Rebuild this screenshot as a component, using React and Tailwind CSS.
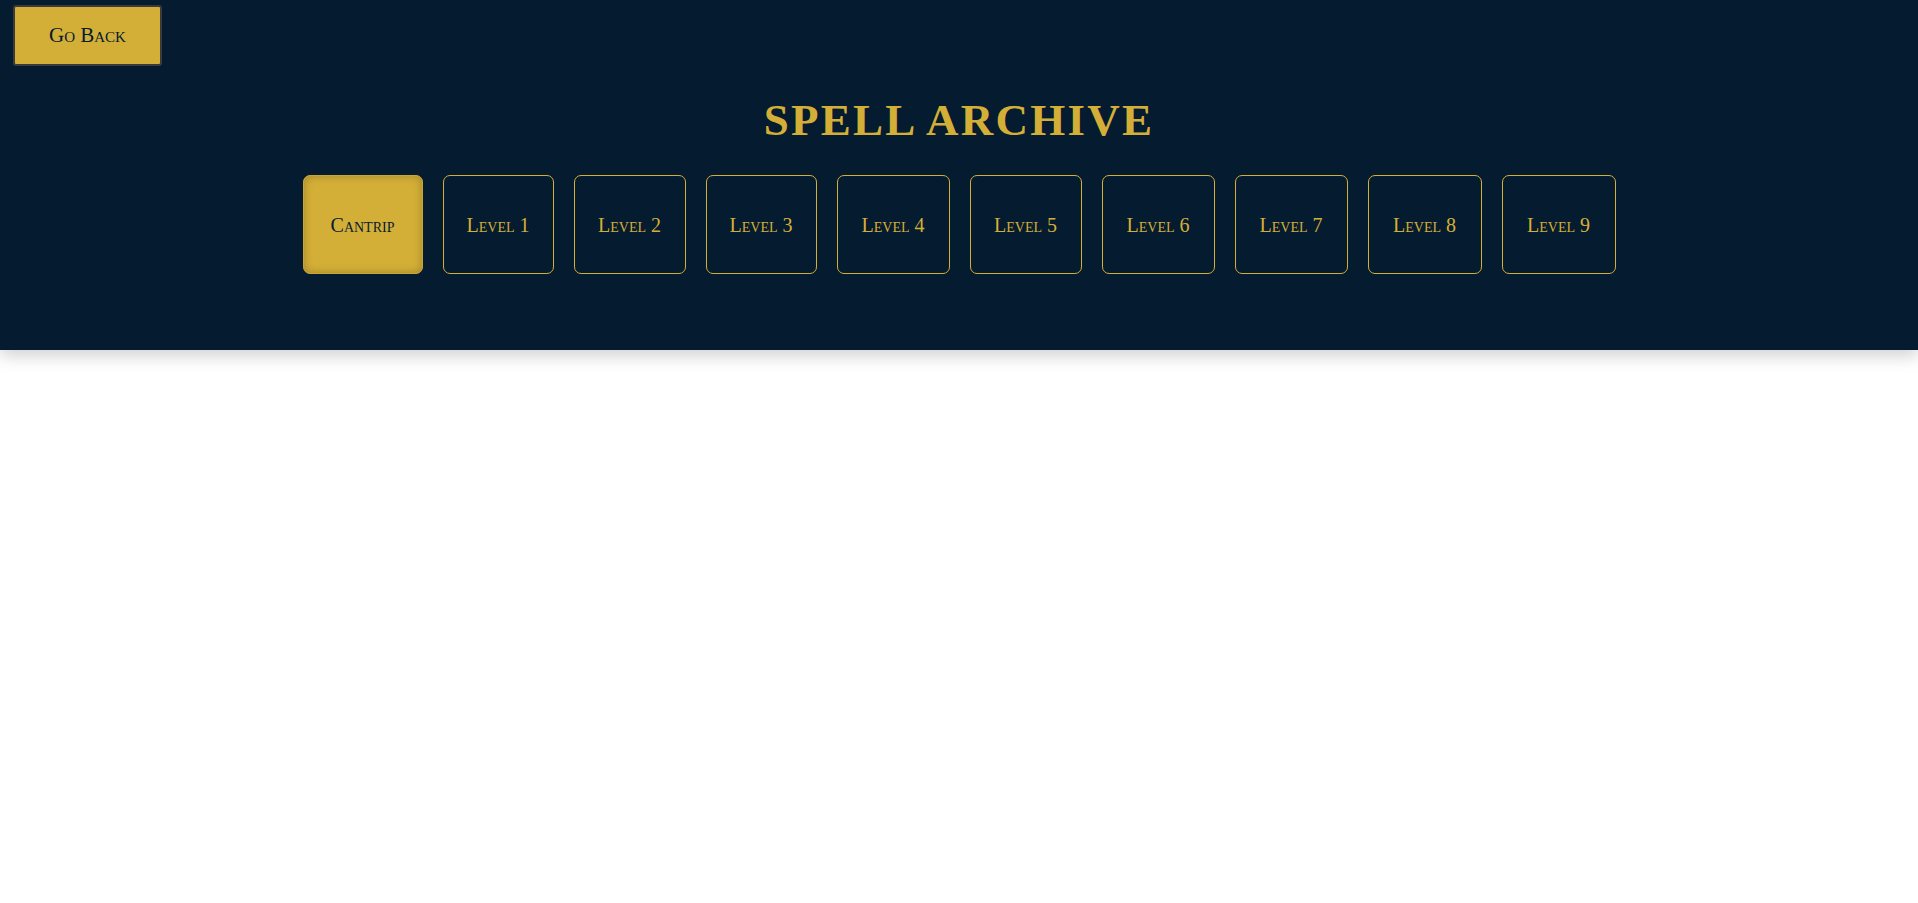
import React from "react";

const levels = [
  ["Level 1", "w-[111px]"],
  ["Level 2", "w-[112px]"],
  ["Level 3", "w-[111px]"],
  ["Level 4", "w-[113px]"],
  ["Level 5", "w-[112px]"],
  ["Level 6", "w-[113px]"],
  ["Level 7", "w-[113px]"],
  ["Level 8", "w-[114px]"],
  ["Level 9", "w-[114px]"],
];

export default function App() {
  return (
    <div className="min-h-[903px] bg-white" style={{ fontFamily: '"Liberation Serif", "DejaVu Serif", serif' }}>
      <header className="h-[350px] bg-[#051b30] shadow-[0_6px_16px_rgba(0,0,0,0.18)] flex flex-col">
        <div className="pl-[13px] pt-[5px]">
          <button className="w-[149px] h-[61px] bg-[#d4af37] border-2 border-[#3a3a3a] rounded-[3px] text-[#051b30] text-[21px] [font-variant:small-caps]">
            Go Back
          </button>
        </div>
        <h1 className="mt-[26px] text-center text-[#d4af37] text-[45px] leading-[56px] tracking-[0.05em] font-semibold">
          SPELL ARCHIVE
        </h1>
        <div className="mt-[27px] flex justify-center gap-[20px]">
          <button className="h-[99px] w-[120px] rounded-[7px] border border-[#c9a533] bg-[#d4af37] shadow-[inset_0_0_8px_rgba(0,0,0,0.25)] text-[#051b30] text-[20px] [font-variant:small-caps]">
            Cantrip
          </button>
          {levels.map(([l, w]) => (
            <button
              key={l}
              className={`h-[99px] ${w} rounded-[7px] border border-[#d4af37] bg-transparent text-[#d4af37] text-[20px] [font-variant:small-caps]`}
            >
              {l}
            </button>
          ))}
        </div>
      </header>
    </div>
  );
}
